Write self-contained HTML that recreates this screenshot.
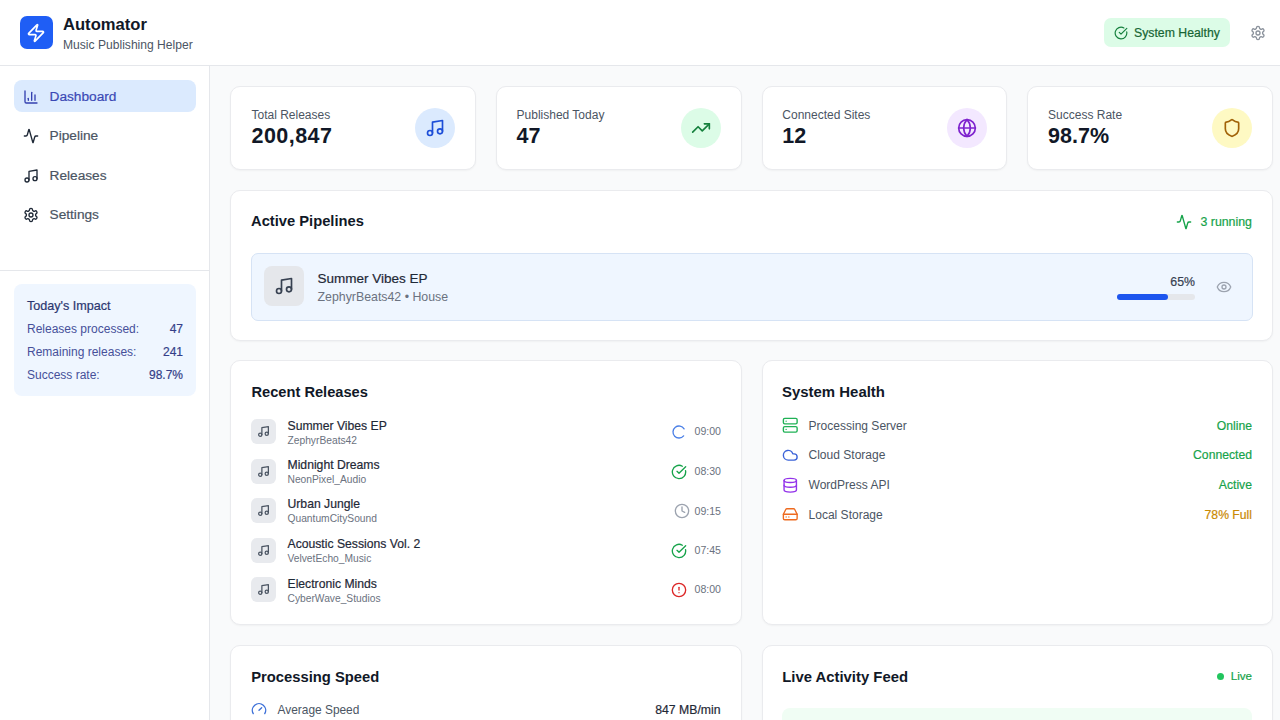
<!DOCTYPE html>
<html><head><meta charset="utf-8"><title>Automator</title>
<style>
*{box-sizing:border-box;margin:0;padding:0}
html,body{width:1280px;height:720px;overflow:hidden;background:#f9fafb;font-family:"Liberation Sans",sans-serif;position:relative}
.a{position:absolute}
.t{position:absolute;white-space:nowrap;line-height:1}
svg{display:block}
.ic{fill:none;stroke:currentColor;stroke-linecap:round;stroke-linejoin:round}
</style></head><body>
<div class="a" style="left:0px;top:0px;width:1280px;height:65px;background:#fff"></div>
<div class="a" style="left:0px;top:65px;width:1280px;height:1px;background:#e5e7eb"></div>
<div class="a" style="left:20.25px;top:16.4px;width:32.5px;height:32.5px;background:#1f5ef5;border-radius:7px"></div>
<svg class="a ic" style="left:26px;top:23px;color:#fff;" width="20" height="20" viewBox="0 0 24 24" stroke-width="2"><path d="M4 14a1 1 0 0 1-.78-1.63l9.9-10.2a.5.5 0 0 1 .86.46l-1.92 6.02A1 1 0 0 0 13 10h7a1 1 0 0 1 .78 1.63l-9.9 10.2a.5.5 0 0 1-.86-.46l1.92-6.02A1 1 0 0 0 11 14z"/></svg>
<div class="t" style="left:63px;top:17px;font-size:16.6px;color:#111827;font-weight:bold;">Automator</div>
<div class="t" style="left:63px;top:39px;font-size:12.1px;color:#4b5563;">Music Publishing Helper</div>
<div class="a" style="left:1104px;top:18px;width:126px;height:29px;background:#dcfce7;border-radius:7px"></div>
<svg class="a ic" style="left:1113.5px;top:25.5px;color:#15803d;" width="14" height="14" viewBox="0 0 24 24" stroke-width="2"><path d="M21.801 10A10 10 0 1 1 17 3.335"/><path d="m9 11 3 3L22 4"/></svg>
<div class="t" style="left:1134px;top:27px;font-size:12.27px;color:#166534;-webkit-text-stroke:0.2px currentColor;">System Healthy</div>
<svg class="a ic" style="left:1250px;top:25px;color:#8b929c;" width="16" height="16" viewBox="0 0 24 24" stroke-width="2"><path d="M12.22 2h-.44a2 2 0 0 0-2 2v.18a2 2 0 0 1-1 1.73l-.43.25a2 2 0 0 1-2 0l-.15-.08a2 2 0 0 0-2.73.73l-.22.38a2 2 0 0 0 .73 2.73l.15.1a2 2 0 0 1 1 1.72v.51a2 2 0 0 1-1 1.74l-.15.09a2 2 0 0 0-.73 2.73l.22.38a2 2 0 0 0 2.73.73l.15-.08a2 2 0 0 1 2 0l.43.25a2 2 0 0 1 1 1.73V20a2 2 0 0 0 2 2h.44a2 2 0 0 0 2-2v-.18a2 2 0 0 1 1-1.730l.43-.25a2 2 0 0 1 2 0l.15.08a2 2 0 0 0 2.73-.73l.22-.39a2 2 0 0 0-.73-2.73l-.15-.08a2 2 0 0 1-1-1.74v-.5a2 2 0 0 1 1-1.74l.15-.09a2 2 0 0 0 .73-2.73l-.22-.38a2 2 0 0 0-2.73-.73l-.15.08a2 2 0 0 1-2 0l-.43-.25a2 2 0 0 1-1-1.73V4a2 2 0 0 0-2-2z"/><circle cx="12" cy="12" r="3"/></svg>
<div class="a" style="left:0px;top:66px;width:209px;height:654px;background:#fff"></div>
<div class="a" style="left:209px;top:66px;width:1px;height:654px;background:#e5e7eb"></div>
<div class="a" style="left:14px;top:80px;width:182px;height:32px;background:#dbeafe;border-radius:8px"></div>
<svg class="a ic" style="left:23px;top:88.5px;color:#3440b0;" width="16" height="16" viewBox="0 0 24 24" stroke-width="2"><path d="M3 3v16a2 2 0 0 0 2 2h16"/><path d="M18 17V9"/><path d="M13 17V5"/><path d="M8 17v-3"/></svg>
<div class="t" style="left:49.5px;top:90px;font-size:13.7px;color:#3a48b5;-webkit-text-stroke:0.2px currentColor;">Dashboard</div>
<svg class="a ic" style="left:23px;top:127.9px;color:#1f2937;" width="16" height="16" viewBox="0 0 24 24" stroke-width="2"><path d="M22 12h-2.48a2 2 0 0 0-1.93 1.46l-2.35 8.36a.25.25 0 0 1-.48 0L9.24 2.18a.25.25 0 0 0-.48 0l-2.35 8.36A2 2 0 0 1 4.49 12H2"/></svg>
<div class="t" style="left:49.5px;top:129px;font-size:13.7px;color:#4b5563;-webkit-text-stroke:0.2px currentColor;">Pipeline</div>
<svg class="a ic" style="left:23px;top:167.8px;color:#1f2937;" width="16" height="16" viewBox="0 0 24 24" stroke-width="2"><path d="M9 18V5l12-2v13"/><circle cx="6" cy="18" r="3"/><circle cx="18" cy="16" r="3"/></svg>
<div class="t" style="left:49.5px;top:169px;font-size:13.7px;color:#4b5563;-webkit-text-stroke:0.2px currentColor;">Releases</div>
<svg class="a ic" style="left:23px;top:206.7px;color:#1f2937;" width="16" height="16" viewBox="0 0 24 24" stroke-width="2"><path d="M12.22 2h-.44a2 2 0 0 0-2 2v.18a2 2 0 0 1-1 1.73l-.43.25a2 2 0 0 1-2 0l-.15-.08a2 2 0 0 0-2.73.73l-.22.38a2 2 0 0 0 .73 2.73l.15.1a2 2 0 0 1 1 1.72v.51a2 2 0 0 1-1 1.74l-.15.09a2 2 0 0 0-.73 2.73l.22.38a2 2 0 0 0 2.73.73l.15-.08a2 2 0 0 1 2 0l.43.25a2 2 0 0 1 1 1.73V20a2 2 0 0 0 2 2h.44a2 2 0 0 0 2-2v-.18a2 2 0 0 1 1-1.730l.43-.25a2 2 0 0 1 2 0l.15.08a2 2 0 0 0 2.73-.73l.22-.39a2 2 0 0 0-.73-2.73l-.15-.08a2 2 0 0 1-1-1.74v-.5a2 2 0 0 1 1-1.74l.15-.09a2 2 0 0 0 .73-2.73l-.22-.38a2 2 0 0 0-2.73-.73l-.15.08a2 2 0 0 1-2 0l-.43-.25a2 2 0 0 1-1-1.73V4a2 2 0 0 0-2-2z"/><circle cx="12" cy="12" r="3"/></svg>
<div class="t" style="left:49.5px;top:208px;font-size:13.7px;color:#4b5563;-webkit-text-stroke:0.2px currentColor;">Settings</div>
<div class="a" style="left:0px;top:270px;width:209px;height:1px;background:#e5e7eb"></div>
<div class="a" style="left:14px;top:284px;width:182px;height:112px;background:#eff6ff;border-radius:8px"></div>
<div class="t" style="left:27px;top:300px;font-size:12.6px;color:#2b3670;-webkit-text-stroke:0.2px currentColor;">Today's Impact</div>
<div class="t" style="left:27px;top:323px;font-size:12px;color:#46509a;">Releases processed:</div>
<div class="t" style="right:1097px;top:323px;font-size:12px;color:#343f88;-webkit-text-stroke:0.2px currentColor;">47</div>
<div class="t" style="left:27px;top:346px;font-size:12px;color:#46509a;">Remaining releases:</div>
<div class="t" style="right:1097px;top:346px;font-size:12px;color:#343f88;-webkit-text-stroke:0.2px currentColor;">241</div>
<div class="t" style="left:27px;top:369px;font-size:12px;color:#46509a;">Success rate:</div>
<div class="t" style="right:1097px;top:369px;font-size:12px;color:#343f88;-webkit-text-stroke:0.2px currentColor;">98.7%</div>
<div class="a" style="left:230.0px;top:86px;width:245.75px;height:84px;background:#fff;border:1px solid #eaebee;border-radius:10px;box-shadow:0 1px 2px rgba(0,0,0,0.04);"></div>
<div class="t" style="left:251.5px;top:109px;font-size:12px;color:#4b5563;">Total Releases</div>
<div class="t" style="left:251.5px;top:126px;font-size:21.5px;color:#111827;font-weight:bold;letter-spacing:0.45px;">200,847</div>
<div class="a" style="left:415.0px;top:108px;width:40px;height:40px;background:#dbeafe;border-radius:50%"></div>
<svg class="a ic" style="left:425.0px;top:118px;color:#1d4ed8;" width="20" height="20" viewBox="0 0 24 24" stroke-width="2"><path d="M9 18V5l12-2v13"/><circle cx="6" cy="18" r="3"/><circle cx="18" cy="16" r="3"/></svg>
<div class="a" style="left:495.75px;top:86px;width:245.75px;height:84px;background:#fff;border:1px solid #eaebee;border-radius:10px;box-shadow:0 1px 2px rgba(0,0,0,0.04);"></div>
<div class="t" style="left:516.55px;top:109px;font-size:12px;color:#4b5563;">Published Today</div>
<div class="t" style="left:516.55px;top:126px;font-size:21.5px;color:#111827;font-weight:bold;">47</div>
<div class="a" style="left:680.75px;top:108px;width:40px;height:40px;background:#dcfce7;border-radius:50%"></div>
<svg class="a ic" style="left:690.75px;top:118px;color:#15803d;" width="20" height="20" viewBox="0 0 24 24" stroke-width="2"><polyline points="22 7 13.5 15.5 8.5 10.5 2 17"/><polyline points="16 7 22 7 22 13"/></svg>
<div class="a" style="left:761.5px;top:86px;width:245.75px;height:84px;background:#fff;border:1px solid #eaebee;border-radius:10px;box-shadow:0 1px 2px rgba(0,0,0,0.04);"></div>
<div class="t" style="left:782.3px;top:109px;font-size:12px;color:#4b5563;">Connected Sites</div>
<div class="t" style="left:782.3px;top:126px;font-size:21.5px;color:#111827;font-weight:bold;">12</div>
<div class="a" style="left:946.5px;top:108px;width:40px;height:40px;background:#f3e8ff;border-radius:50%"></div>
<svg class="a ic" style="left:956.5px;top:118px;color:#7e22ce;" width="20" height="20" viewBox="0 0 24 24" stroke-width="2"><circle cx="12" cy="12" r="10"/><path d="M12 2a14.5 14.5 0 0 0 0 20 14.5 14.5 0 0 0 0-20"/><path d="M2 12h20"/></svg>
<div class="a" style="left:1027.25px;top:86px;width:245.75px;height:84px;background:#fff;border:1px solid #eaebee;border-radius:10px;box-shadow:0 1px 2px rgba(0,0,0,0.04);"></div>
<div class="t" style="left:1048.05px;top:109px;font-size:12px;color:#4b5563;">Success Rate</div>
<div class="t" style="left:1048.05px;top:126px;font-size:21.5px;color:#111827;font-weight:bold;">98.7%</div>
<div class="a" style="left:1212.25px;top:108px;width:40px;height:40px;background:#fef9c3;border-radius:50%"></div>
<svg class="a ic" style="left:1222.25px;top:118px;color:#a16207;" width="20" height="20" viewBox="0 0 24 24" stroke-width="2"><path d="M20 13c0 5-3.5 7.5-7.66 8.95a1 1 0 0 1-.67-.01C7.5 20.5 4 18 4 13V6a1 1 0 0 1 1-1c2 0 4.5-1.2 6.24-2.72a1.17 1.17 0 0 1 1.52 0C14.51 3.81 17 5 19 5a1 1 0 0 1 1 1z"/></svg>
<div class="a" style="left:230px;top:190px;width:1043px;height:151px;background:#fff;border:1px solid #eaebee;border-radius:10px;box-shadow:0 1px 2px rgba(0,0,0,0.04);"></div>
<div class="t" style="left:251px;top:214px;font-size:14.73px;color:#111827;font-weight:bold;">Active Pipelines</div>
<svg class="a ic" style="left:1176px;top:214px;color:#16a34a;" width="16" height="16" viewBox="0 0 24 24" stroke-width="2"><path d="M22 12h-2.48a2 2 0 0 0-1.93 1.46l-2.35 8.36a.25.25 0 0 1-.48 0L9.24 2.18a.25.25 0 0 0-.48 0l-2.35 8.36A2 2 0 0 1 4.49 12H2"/></svg>
<div class="t" style="right:28px;top:216px;font-size:12.37px;color:#16a34a;-webkit-text-stroke:0.2px currentColor;">3 running</div>
<div class="a" style="left:251px;top:253px;width:1002px;height:68px;background:#eff6ff;border:1px solid #d6e3f5;border-radius:7px"></div>
<div class="a" style="left:264px;top:266px;width:40px;height:40px;background:#e5e7eb;border-radius:8px"></div>
<svg class="a ic" style="left:274px;top:276px;color:#374151;" width="20" height="20" viewBox="0 0 24 24" stroke-width="2"><path d="M9 18V5l12-2v13"/><circle cx="6" cy="18" r="3"/><circle cx="18" cy="16" r="3"/></svg>
<div class="t" style="left:317.5px;top:272px;font-size:13.5px;color:#1f2937;-webkit-text-stroke:0.2px currentColor;">Summer Vibes EP</div>
<div class="t" style="left:317.5px;top:291px;font-size:12.35px;color:#6b7280;">ZephyrBeats42 • House</div>
<div class="t" style="right:85px;top:276px;font-size:12.34px;color:#374151;-webkit-text-stroke:0.2px currentColor;">65%</div>
<div class="a" style="left:1116.5px;top:293.5px;width:78px;height:6px;background:#e5e7eb;border-radius:3px"></div>
<div class="a" style="left:1116.5px;top:293.5px;width:51px;height:6px;background:#1d55ee;border-radius:3px"></div>
<svg class="a ic" style="left:1215.5px;top:278.5px;color:#9ca3af;" width="16" height="16" viewBox="0 0 24 24" stroke-width="2"><path d="M2.062 12.348a1 1 0 0 1 0-.696 10.75 10.75 0 0 1 19.876 0 1 1 0 0 1 0 .696 10.75 10.75 0 0 1-19.876 0"/><circle cx="12" cy="12" r="3"/></svg>
<div class="a" style="left:230px;top:360px;width:512px;height:265px;background:#fff;border:1px solid #eaebee;border-radius:10px;box-shadow:0 1px 2px rgba(0,0,0,0.04);"></div>
<div class="t" style="left:251.5px;top:385px;font-size:14.65px;color:#111827;font-weight:bold;">Recent Releases</div>
<div class="a" style="left:251.25px;top:419.1px;width:25px;height:25px;background:#e8eaee;border-radius:6px"></div>
<svg class="a ic" style="left:257.25px;top:425.1px;color:#4b5563;" width="13" height="13" viewBox="0 0 24 24" stroke-width="2.3"><path d="M9 18V5l12-2v13"/><circle cx="6" cy="18" r="3"/><circle cx="18" cy="16" r="3"/></svg>
<div class="t" style="left:287.5px;top:420px;font-size:12.2px;color:#1f2937;-webkit-text-stroke:0.2px currentColor;">Summer Vibes EP</div>
<div class="t" style="left:287.5px;top:436px;font-size:10.25px;color:#6b7280;">ZephyrBeats42</div>
<div class="t" style="right:559px;top:426px;font-size:10.6px;color:#6b7280;">09:00</div>
<svg class="a ic" style="left:670.5px;top:424.0px;color:#4a7fe6;transform:rotate(40deg);" width="16" height="16" viewBox="0 0 24 24" stroke-width="2"><path d="M21 12a9 9 0 1 1-6.219-8.56"/></svg>
<div class="a" style="left:251.25px;top:458.6px;width:25px;height:25px;background:#e8eaee;border-radius:6px"></div>
<svg class="a ic" style="left:257.25px;top:464.6px;color:#4b5563;" width="13" height="13" viewBox="0 0 24 24" stroke-width="2.3"><path d="M9 18V5l12-2v13"/><circle cx="6" cy="18" r="3"/><circle cx="18" cy="16" r="3"/></svg>
<div class="t" style="left:287.5px;top:459px;font-size:12.2px;color:#1f2937;-webkit-text-stroke:0.2px currentColor;">Midnight Dreams</div>
<div class="t" style="left:287.5px;top:475px;font-size:10.25px;color:#6b7280;">NeonPixel_Audio</div>
<div class="t" style="right:559px;top:466px;font-size:10.6px;color:#6b7280;">08:30</div>
<svg class="a ic" style="left:670.5px;top:463.5px;color:#16a34a;" width="16" height="16" viewBox="0 0 24 24" stroke-width="2"><path d="M21.801 10A10 10 0 1 1 17 3.335"/><path d="m9 11 3 3L22 4"/></svg>
<div class="a" style="left:251.25px;top:498.1px;width:25px;height:25px;background:#e8eaee;border-radius:6px"></div>
<svg class="a ic" style="left:257.25px;top:504.1px;color:#4b5563;" width="13" height="13" viewBox="0 0 24 24" stroke-width="2.3"><path d="M9 18V5l12-2v13"/><circle cx="6" cy="18" r="3"/><circle cx="18" cy="16" r="3"/></svg>
<div class="t" style="left:287.5px;top:498px;font-size:12.2px;color:#1f2937;-webkit-text-stroke:0.2px currentColor;">Urban Jungle</div>
<div class="t" style="left:287.5px;top:514px;font-size:10.25px;color:#6b7280;">QuantumCitySound</div>
<div class="t" style="right:559px;top:506px;font-size:10.6px;color:#6b7280;">09:15</div>
<svg class="a ic" style="left:673.5px;top:503.0px;color:#9ca3af;" width="16" height="16" viewBox="0 0 24 24" stroke-width="2"><circle cx="12" cy="12" r="10"/><polyline points="12 6 12 12 16 14"/></svg>
<div class="a" style="left:251.25px;top:537.6px;width:25px;height:25px;background:#e8eaee;border-radius:6px"></div>
<svg class="a ic" style="left:257.25px;top:543.6px;color:#4b5563;" width="13" height="13" viewBox="0 0 24 24" stroke-width="2.3"><path d="M9 18V5l12-2v13"/><circle cx="6" cy="18" r="3"/><circle cx="18" cy="16" r="3"/></svg>
<div class="t" style="left:287.5px;top:538px;font-size:12.2px;color:#1f2937;-webkit-text-stroke:0.2px currentColor;">Acoustic Sessions Vol. 2</div>
<div class="t" style="left:287.5px;top:554px;font-size:10.25px;color:#6b7280;">VelvetEcho_Music</div>
<div class="t" style="right:559px;top:545px;font-size:10.6px;color:#6b7280;">07:45</div>
<svg class="a ic" style="left:670.5px;top:542.5px;color:#16a34a;" width="16" height="16" viewBox="0 0 24 24" stroke-width="2"><path d="M21.801 10A10 10 0 1 1 17 3.335"/><path d="m9 11 3 3L22 4"/></svg>
<div class="a" style="left:251.25px;top:577.1px;width:25px;height:25px;background:#e8eaee;border-radius:6px"></div>
<svg class="a ic" style="left:257.25px;top:583.1px;color:#4b5563;" width="13" height="13" viewBox="0 0 24 24" stroke-width="2.3"><path d="M9 18V5l12-2v13"/><circle cx="6" cy="18" r="3"/><circle cx="18" cy="16" r="3"/></svg>
<div class="t" style="left:287.5px;top:578px;font-size:12.2px;color:#1f2937;-webkit-text-stroke:0.2px currentColor;">Electronic Minds</div>
<div class="t" style="left:287.5px;top:594px;font-size:10.25px;color:#6b7280;">CyberWave_Studios</div>
<div class="t" style="right:559px;top:584px;font-size:10.6px;color:#6b7280;">08:00</div>
<svg class="a ic" style="left:670.5px;top:582.0px;color:#dc2626;" width="16" height="16" viewBox="0 0 24 24" stroke-width="2"><circle cx="12" cy="12" r="10"/><line x1="12" x2="12" y1="8" y2="12"/><line x1="12" x2="12.01" y1="16" y2="16"/></svg>
<div class="a" style="left:761.5px;top:360px;width:511.5px;height:265px;background:#fff;border:1px solid #eaebee;border-radius:10px;box-shadow:0 1px 2px rgba(0,0,0,0.04);"></div>
<div class="t" style="left:782px;top:385px;font-size:14.94px;color:#111827;font-weight:bold;">System Health</div>
<svg class="a ic" style="left:781.75px;top:417.35px;color:#1fb155;" width="16.5" height="16.5" viewBox="0 0 24 24" stroke-width="2"><rect width="20" height="8" x="2" y="2" rx="2" ry="2"/><rect width="20" height="8" x="2" y="14" rx="2" ry="2"/><line x1="6" x2="6.01" y1="6" y2="6"/><line x1="6" x2="6.01" y1="18" y2="18"/></svg>
<div class="t" style="left:808.5px;top:420px;font-size:12.04px;color:#4b5563;">Processing Server</div>
<div class="t" style="right:28px;top:420px;font-size:12.2px;color:#16a34a;-webkit-text-stroke:0.2px currentColor;">Online</div>
<svg class="a ic" style="left:781.75px;top:446.95000000000005px;color:#3b63d8;" width="16.5" height="16.5" viewBox="0 0 24 24" stroke-width="2"><path d="M17.5 19H9a7 7 0 1 1 6.71-9h1.79a4.5 4.5 0 1 1 0 9Z"/></svg>
<div class="t" style="left:808.5px;top:449px;font-size:12.04px;color:#4b5563;">Cloud Storage</div>
<div class="t" style="right:28px;top:449px;font-size:12.2px;color:#16a34a;-webkit-text-stroke:0.2px currentColor;">Connected</div>
<svg class="a ic" style="left:781.75px;top:476.55px;color:#9333ea;" width="16.5" height="16.5" viewBox="0 0 24 24" stroke-width="2"><ellipse cx="12" cy="5" rx="9" ry="3"/><path d="M3 5V19A9 3 0 0 0 21 19V5"/><path d="M3 12A9 3 0 0 0 21 12"/></svg>
<div class="t" style="left:808.5px;top:479px;font-size:12.04px;color:#4b5563;">WordPress API</div>
<div class="t" style="right:28px;top:479px;font-size:12.2px;color:#16a34a;-webkit-text-stroke:0.2px currentColor;">Active</div>
<svg class="a ic" style="left:781.75px;top:506.1500000000001px;color:#ee6a1f;" width="16.5" height="16.5" viewBox="0 0 24 24" stroke-width="2"><line x1="22" x2="2" y1="12" y2="12"/><path d="M5.45 5.11 2 12v6a2 2 0 0 0 2 2h16a2 2 0 0 0 2-2v-6l-3.45-6.89A2 2 0 0 0 16.76 4H7.24a2 2 0 0 0-1.79 1.11z"/><line x1="6" x2="6.01" y1="16" y2="16"/><line x1="10" x2="10.01" y1="16" y2="16"/></svg>
<div class="t" style="left:808.5px;top:509px;font-size:12.04px;color:#4b5563;">Local Storage</div>
<div class="t" style="right:28px;top:509px;font-size:12.2px;color:#ca8a04;-webkit-text-stroke:0.2px currentColor;">78% Full</div>
<div class="a" style="left:230px;top:645px;width:512px;height:120px;background:#fff;border:1px solid #eaebee;border-radius:10px;box-shadow:0 1px 2px rgba(0,0,0,0.04);"></div>
<div class="t" style="left:251.25px;top:670px;font-size:14.77px;color:#111827;font-weight:bold;">Processing Speed</div>
<svg class="a ic" style="left:251px;top:701px;color:#3b6fd8;" width="16" height="16" viewBox="0 0 24 24" stroke-width="2"><path d="m12 14 4-4"/><path d="M3.34 19a10 10 0 1 1 17.32 0"/></svg>
<div class="t" style="left:277.5px;top:705px;font-size:11.91px;color:#4b5563;">Average Speed</div>
<div class="t" style="right:559.5px;top:704px;font-size:12.24px;color:#1f2937;-webkit-text-stroke:0.2px currentColor;">847 MB/min</div>
<div class="a" style="left:761.5px;top:645px;width:511.5px;height:120px;background:#fff;border:1px solid #eaebee;border-radius:10px;box-shadow:0 1px 2px rgba(0,0,0,0.04);"></div>
<div class="t" style="left:782.2px;top:670px;font-size:14.86px;color:#111827;font-weight:bold;">Live Activity Feed</div>
<div class="a" style="left:1216.5px;top:673px;width:7px;height:7px;background:#22c55e;border-radius:50%"></div>
<div class="t" style="right:28px;top:670px;font-size:11.61px;color:#16a34a;-webkit-text-stroke:0.2px currentColor;">Live</div>
<div class="a" style="left:782px;top:708px;width:470px;height:40px;background:#f0fdf4;border-radius:8px"></div>
</body></html>
